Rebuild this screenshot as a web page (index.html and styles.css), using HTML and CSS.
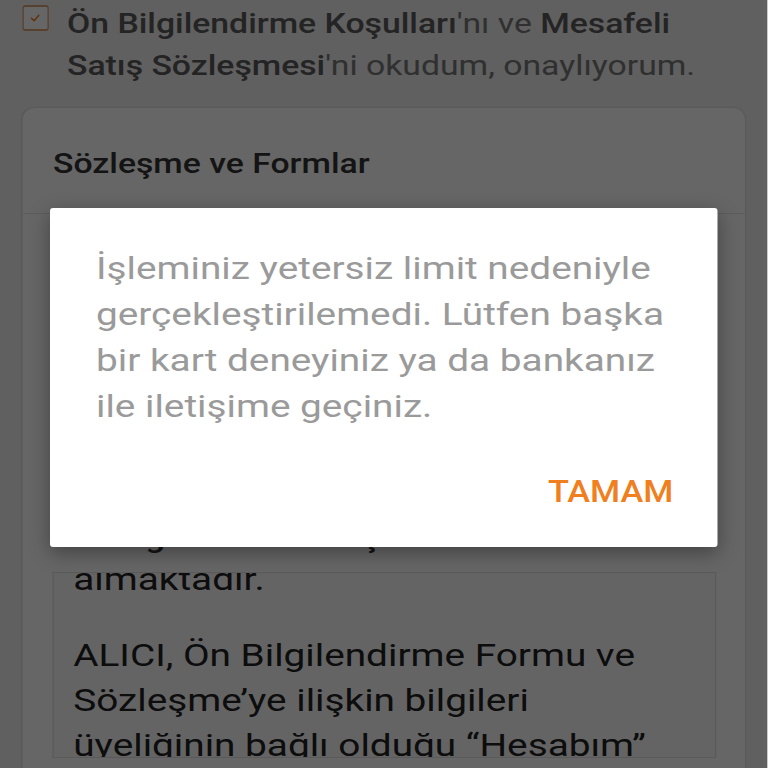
FILE: index.html
```html
<!DOCTYPE html>
<html lang="tr">
<head>
<meta charset="utf-8">
<link rel="stylesheet" href="styles.css">
</head>
<body>
<div class="screen">
  <div class="page">
    <div class="consent">
      <span class="checkbox">
        <svg viewBox="0 0 24 24" width="16" height="18" preserveAspectRatio="none"><path d="M6 12.5l4 3.5 7-8" fill="none" stroke="#f07f1f" stroke-width="2.2" stroke-linecap="round" stroke-linejoin="round"/></svg>
      </span>
      <p class="consent-text"><b>Ön Bilgilendirme Koşulları</b>'nı ve <b>Mesafeli Satış Sözleşmesi</b>'ni okudum, onaylıyorum.</p>
    </div>
    <section class="card">
      <h2 class="card-title">Sözleşme ve Formlar</h2>
      <div class="card-body">
        <h3 class="sub-title">Ön Bilgilendirme Koşulları</h3>
        <div class="scroll-box">
          <div class="scroll-content">
            <p>almaktadır.</p>
            <p>ALICI, Ön Bilgilendirme Formu ve Sözleşme’ye ilişkin bilgileri üyeliğinin bağlı olduğu “Hesabım” sayfasından inceleyebilir.</p>
          </div>
        </div>
      </div>
    </section>
  </div>
  <div class="overlay"></div>
  <div class="dialog">
    <p class="dialog-text">İşleminiz yetersiz limit nedeniyle gerçekleştirilemedi. Lütfen başka bir kart deneyiniz ya da bankanız ile iletişime geçiniz.</p>
    <div class="dialog-actions">
      <button class="dialog-btn"><span class="dialog-btn-label">TAMAM</span></button>
    </div>
  </div>
</div>
</body>
</html>
```
FILE: styles.css
```css
* { box-sizing: border-box; }
html, body {
  margin: 0;
  padding: 0;
  width: 768px;
  height: 768px;
  overflow: hidden;
  font-family: Roboto, "Noto Sans", sans-serif;
  background: #efefef;
}
/* The screenshot is stretched horizontally by 1.25; lay out at native width and stretch. */
.screen {
  position: relative;
  width: 614.4px;
  height: 768px;
  transform: scaleX(1.25);
  transform-origin: 0 0;
  overflow: hidden;
}
.page {
  width: 614.4px;
  height: 768px;
  overflow: hidden;
}
.consent {
  display: flex;
  align-items: flex-start;
  padding: 3px 30px 0 18.4px;
}
.checkbox {
  flex: none;
  width: 20.8px;
  height: 26px;
  margin-top: 2px;
  margin-right: 14.4px;
  border: 2px solid #d9a070;
  border-width: 2px 1.6px;
  border-radius: 2.4px / 3px;
  background: #fff;
  display: flex;
  align-items: center;
  justify-content: center;
}
.checkbox svg { width: 12.8px; height: 16px; }
.consent-text {
  margin: 0;
  font-size: 27px;
  line-height: 42px;
  color: #787878;
}
.consent-text b {
  font-weight: 500;
  color: #5a5a5a;
}
.card {
  margin: 21px 0 0 18.4px;
  width: 577.6px;
  height: 700px;
  background: #fff;
  border-radius: 9.6px / 12px;
  box-shadow: 0 0 2px rgba(0,0,0,0.18);
}
.card-title {
  margin: 0;
  padding: 33.7px 24px 0 24px;
  height: 106px;
  font-size: 27px;
  font-weight: 500;
  line-height: 44px;
  color: #333;
  border-bottom: 1px solid #e6e6e6;
}
.card-body {
  padding: 0 23.2px 0 24px;
}
.sub-title {
  margin: 0;
  padding-top: 304.4px;
  font-size: 28px;
  font-weight: 500;
  line-height: 40px;
  color: #333;
}
.scroll-box {
  margin-top: 13.6px;
  height: 186px;
  border: 1px solid #e2e2e2;
  background: #fbfbfb;
  overflow: hidden;
  padding: 0 45px 0 15.2px;
}
.scroll-content {
  margin-top: -16px;
  font-size: 31px;
  line-height: 45px;
  color: #222;
}
.scroll-content p {
  margin: 0 0 31px 0;
}
.overlay {
  position: absolute;
  inset: 0;
  background: rgba(0,0,0,0.6);
}
.dialog {
  position: absolute;
  left: 40px;
  top: 208px;
  width: 534.4px;
  height: 339px;
  background: #fff;
  border-radius: 2.4px / 3px;
  box-shadow: 0 6px 18px rgba(0,0,0,0.35);
  padding: 38px 35.2px 0 36.8px;
}
.dialog-text {
  margin: 0 -9px 0 0;
  font-size: 31px;
  line-height: 46px;
  color: #9a9a9a;
}
.dialog-actions {
  display: flex;
  justify-content: flex-end;
  margin-top: 38px;
}
.dialog-btn {
  border: 0;
  background: none;
  padding: 0;
  font-family: Roboto, "Noto Sans", sans-serif;
  font-size: 32px;
  font-weight: 500;
  line-height: 46px;
  color: #f07f1f;
}
.dialog-btn-label {
  display: inline-block;
  transform: scaleX(0.86);
  transform-origin: 100% 50%;
}
```
